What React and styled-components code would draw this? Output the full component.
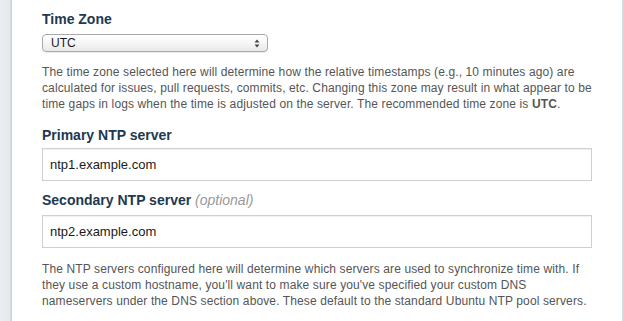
import React from "react";
import styled, { createGlobalStyle } from "styled-components";

const Global = createGlobalStyle`
  html, body {
    margin: 0;
    padding: 0;
    background: #e9edf0;
  }
  body {
    font-family: "Liberation Sans", Arial, Helvetica, sans-serif;
    -webkit-font-smoothing: antialiased;
  }
`;

const Page = styled.div`
  display: flex;
  width: 624px;
  height: 321px;
  overflow: hidden;
`;

const Gutter = styled.div`
  width: 12px;
  flex: none;
  background: ${({ side }) =>
    side === "left"
      ? "linear-gradient(to right, #eceff2 0%, #e3e8eb 85%, #c9d0d5 92%, #c9d0d5 100%)"
      : "linear-gradient(to right, #cfd6db 0%, #dfe4e8 30%, #e9edf0 100%)"};
`;

const Panel = styled.div`
  flex: 1;
  background: #fff;
  padding: 10px 30px 0 30px;
  display: flex;
  flex-direction: column;
`;

const Label = styled.div`
  font-size: 14px;
  line-height: 18px;
  font-weight: 700;
  color: #213850;
  margin-top: ${({ $mt }) => $mt || 0}px;
`;

const Optional = styled.span`
  font-weight: 400;
  font-style: italic;
  color: #9a9a9a;
`;

const Select = styled.div`
  margin-top: 6px;
  width: 226px;
  height: 18px;
  box-sizing: border-box;
  border: 1px solid #a9a9a9;
  border-radius: 4px;
  background: linear-gradient(to bottom, #ffffff 0%, #f6f6f6 50%, #e9e9e9 100%);
  box-shadow: 0 1px 1px rgba(0, 0, 0, 0.08);
  display: flex;
  align-items: center;
  justify-content: space-between;
  padding: 0 7px 0 8px;
  font-size: 12px;
  color: #1a1a1a;
`;

const Arrows = styled.svg`
  width: 6px;
  height: 9px;
`;

const Help = styled.p`
  margin: ${({ $mt }) => $mt || 0}px 0 0 0;
  font-size: 12px;
  line-height: 16px;
  letter-spacing: 0.12px;
  color: #555;
  white-space: nowrap;
`;

const Input = styled.div`
  margin-top: ${({ $mt }) => $mt || 4}px;
  height: 33px;
  box-sizing: border-box;
  border: 1px solid #cfcfcf;
  box-shadow: inset 0 1px 1px rgba(0, 0, 0, 0.06);
  background: #fff;
  display: flex;
  align-items: center;
  padding: 0 7px;
  font-size: 13px;
  color: #1a1a1a;
`;

export default function App() {
  return (
    <Page>
      <Global />
      <Gutter side="left" />
      <Panel>
        <Label>Time Zone</Label>
        <Select>
          <span>UTC</span>
          <Arrows viewBox="0 0 6 9">
            <path d="M3 0.5 L5.5 3.5 L0.5 3.5 Z" fill="#444" />
            <path d="M3 8.5 L5.5 5.5 L0.5 5.5 Z" fill="#444" />
          </Arrows>
        </Select>
        <Help $mt={12}>
          The time zone selected here will determine how the relative timestamps (e.g., 10 minutes ago) are
          <br />
          calculated for issues, pull requests, commits, etc. Changing this zone may result in what appear to be
          <br />
          time gaps in logs when the time is adjusted on the server. The recommended time zone is <b>UTC</b>.
        </Help>
        <Label $mt={14}>Primary NTP server</Label>
        <Input>ntp1.example.com</Input>
        <Label $mt={10}>
          Secondary NTP server <Optional>(optional)</Optional>
        </Label>
        <Input $mt={6}>ntp2.example.com</Input>
        <Help $mt={13}>
          The NTP servers configured here will determine which servers are used to synchronize time with. If
          <br />
          they use a custom hostname, you'll want to make sure you've specified your custom DNS
          <br />
          nameservers under the DNS section above. These default to the standard Ubuntu NTP pool servers.
        </Help>
      </Panel>
      <Gutter side="right" />
    </Page>
  );
}
